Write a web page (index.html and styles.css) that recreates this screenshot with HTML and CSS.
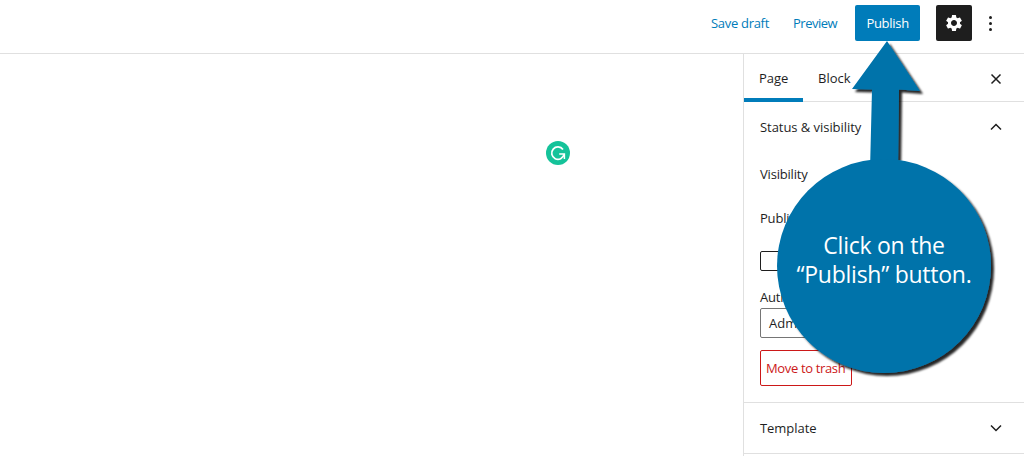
FILE: index.html
```html
<!DOCTYPE html>
<html lang="en">
<head>
<meta charset="utf-8">
<title>Publish</title>
<link rel="stylesheet" href="styles.css">
</head>
<body>
<div class="app">
  <header class="topbar">
    <a class="link save">Save draft</a>
    <a class="link preview">Preview</a>
    <button class="publish">Publish</button>
    <button class="gear" aria-label="Settings">
      <svg width="20" height="20" viewBox="0 0 24 24"><path fill="#fff" d="M19.14 12.94c.04-.3.06-.61.06-.94 0-.32-.02-.64-.07-.94l2.03-1.58a.49.49 0 0 0 .12-.61l-1.92-3.32a.488.488 0 0 0-.59-.22l-2.39.96c-.5-.38-1.03-.7-1.62-.94l-.36-2.54a.484.484 0 0 0-.48-.41h-3.84c-.24 0-.43.17-.47.41l-.36 2.54c-.59.24-1.13.57-1.62.94l-2.39-.96c-.22-.08-.47 0-.59.22L2.74 8.87c-.12.21-.08.47.12.61l2.03 1.58c-.05.3-.09.63-.09.94s.02.64.07.94l-2.03 1.58a.49.49 0 0 0-.12.61l1.92 3.32c.12.22.37.29.59.22l2.39-.96c.5.38 1.03.7 1.62.94l.36 2.54c.05.24.24.41.48.41h3.84c.24 0 .44-.17.47-.41l.36-2.54c.59-.24 1.13-.56 1.62-.94l2.39.96c.22.08.47 0 .59-.22l1.92-3.32c.12-.22.07-.47-.12-.61l-2.01-1.58zM12 15.6c-1.98 0-3.6-1.62-3.6-3.6s1.62-3.6 3.6-3.6 3.6 1.62 3.6 3.6-1.62 3.6-3.6 3.6z"/></svg>
    </button>
    <span class="dots"><i></i><i></i><i></i></span>
  </header>
  <div class="main">
    <div class="canvas">
      <span class="grammarly">
        <svg width="24" height="24" viewBox="0 0 24 24"><circle cx="12" cy="12" r="12" fill="#15c39a"/><path d="M17 8.6A6.2 6.2 0 1 0 18 13.4" fill="none" stroke="#fff" stroke-width="1.7"/><path d="M13.2 13h5.2v5" fill="none" stroke="#fff" stroke-width="1.5"/></svg>
      </span>
    </div>
    <aside class="sidebar">
      <div class="tabs">
        <span class="tab active">Page</span>
        <span class="tab">Block</span>
        <svg class="close" width="12" height="12" viewBox="0 0 12 12"><path d="M1.5 1.5l9 9M10.5 1.5l-9 9" stroke="#1e1e1e" stroke-width="1.5"/></svg>
      </div>
      <section class="panel status">
        <div class="panel-head">
          <span>Status &amp; visibility</span>
          <svg width="12" height="8" viewBox="0 0 12 8"><path d="M1 6.5L6 1.5l5 5" fill="none" stroke="#1e1e1e" stroke-width="1.5"/></svg>
        </div>
        <div class="row vis">Visibility</div>
        <div class="row pub">Publish</div>
        <div class="check"></div>
        <div class="row auth">Author</div>
        <div class="select">Admin</div>
        <div class="trash">Move to trash</div>
      </section>
      <section class="panel template">
        <div class="panel-head">
          <span>Template</span>
          <svg width="12" height="8" viewBox="0 0 12 8"><path d="M1 1.5L6 6.5l5-5" fill="none" stroke="#1e1e1e" stroke-width="1.5"/></svg>
        </div>
      </section>
    </aside>
  </div>
  <div class="callout">
    <svg class="callout-art" width="1024" height="456" viewBox="0 0 1024 456">
      <defs>
        <filter id="sh" x="-20%" y="-20%" width="140%" height="140%">
          <feDropShadow dx="3" dy="3" stdDeviation="1.3" flood-color="#000" flood-opacity=".85"/>
        </filter>
      </defs>
      <g filter="url(#sh)" fill="#0073aa">
        <path d="M887 41L852 89L872 89.5L870 170L898 170L899 89.5L920 91Z"/>
        <circle cx="884" cy="266" r="107"/>
      </g>
    </svg>
    <p class="callout-text">Click on the<br>“Publish” button.</p>
  </div>
</div>
</body>
</html>
```
FILE: styles.css
```css
* { box-sizing: border-box; }
html, body { margin: 0; padding: 0; }
body { width: 1024px; height: 456px; overflow: hidden; background: #fff; font-family: "Open Sans", "Noto Sans", sans-serif; font-size: 13px; color: #1e1e1e; }
.app { position: relative; width: 1024px; height: 456px; overflow: hidden; }
.topbar { height: 54px; border-bottom: 1px solid #e0e0e0; display: flex; align-items: flex-start; padding-top: 5px; }
.link { color: #007cba; font-size: 13px; line-height: 36px; letter-spacing: -0.3px; }
.save { margin-left: 711px; }
.preview { margin-left: 24px; letter-spacing: -0.5px; }
.publish { margin-left: 18px; width: 65px; height: 36px; background: #007cba; color: #fff; border: 0; border-radius: 2px; font: inherit; font-size: 13px; letter-spacing: -0.3px; padding: 0; }
.gear { margin-left: 16px; width: 36px; height: 36px; background: #1e1e1e; border: 0; border-radius: 2px; padding: 0; display: flex; align-items: center; justify-content: center; }
.dots { margin-left: 17px; width: 4px; height: 36px; display: flex; flex-direction: column; gap: 3px; padding-top: 11px; }
.dots i { width: 3px; height: 3px; background: #1e1e1e; border-radius: 50%; }
.main { display: flex; height: 402px; }
.canvas { flex: 1; padding: 87px 0 0 546px; }
.grammarly { display: block; width: 24px; height: 24px; }
.sidebar { width: 281px; border-left: 1px solid #e0e0e0; }
.tabs { height: 48px; border-bottom: 1px solid #e0e0e0; display: flex; align-items: flex-start; position: relative; }
.tab { height: 48px; line-height: 48px; padding: 0 15px; font-size: 13px; width: 59px; }
.tab.active { box-shadow: inset 0 -4px 0 #007cba; }
.close { margin: 19px 22px 0 auto; }
.panel { border-bottom: 1px solid #e0e0e0; padding: 0 16px; }
.panel-head { display: flex; align-items: center; justify-content: space-between; font-weight: 500; padding-right: 6px; height: 50px; letter-spacing: -0.05px; }
.status { height: 301px; }
.row { font-size: 13px; line-height: 18px; letter-spacing: -0.2px; }
.vis { margin-top: 13px; }
.pub { margin-top: 26px; }
.check { margin-top: 24px; width: 80px; height: 20px; border: 1px solid #1e1e1e; border-radius: 2px; }
.auth { margin-top: 17px; }
.select { margin-top: 2px; width: 100px; height: 30px; border: 1px solid #757575; border-radius: 2px; line-height: 28px; padding-left: 8px; }
.trash { margin-top: 12px; width: 92px; height: 36px; border: 1px solid #cc1818; border-radius: 2px; color: #cc1818; line-height: 34px; padding-left: 5px; white-space: nowrap; letter-spacing: -0.35px; }
.template { height: 51px; }
.callout { position: absolute; inset: 0; pointer-events: none; }
.callout-art { display: block; }
.callout-text { position: absolute; left: 777px; top: 231px; width: 214px; margin: 0; text-align: center; color: #fff; font-size: 23px; line-height: 29px; letter-spacing: -0.25px; }
```
